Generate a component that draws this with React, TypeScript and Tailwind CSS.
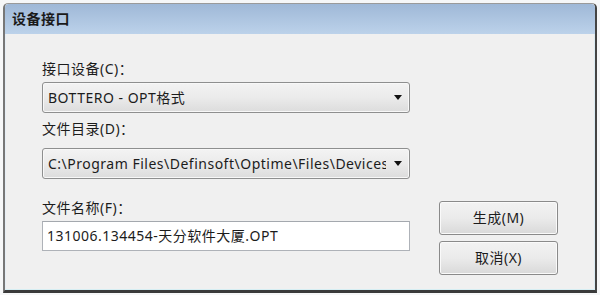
import React from "react";

function Arrow() {
  return (
    <svg width="8" height="5" viewBox="0 0 8 5" className="shrink-0">
      <path d="M0 0 L8 0 L4 5 Z" fill="#111" />
    </svg>
  );
}

function Combo({ text }: { text: string }) {
  return (
    <div className="flex h-[31px] w-full items-center rounded-[3px] border border-[#8e8f8f] bg-gradient-to-b from-[#f3f3f3] via-[#ebebeb] to-[#dcdcdc] pl-[5px] pr-[7px] shadow-[inset_0_0_0_1px_#f8f8f8]">
      <div className="min-w-0 flex-1 overflow-hidden whitespace-nowrap text-[#1c1c1c]">{text}</div>
      <div className="ml-[8px]">
        <Arrow />
      </div>
    </div>
  );
}

function Btn({ text }: { text: string }) {
  return (
    <div className="flex h-[34px] w-[119px] items-center justify-center rounded-[3px] border border-[#8a8a8a] bg-gradient-to-b from-[#f2f2f2] via-[#ebebeb] to-[#d9d9d9] text-[#1c1c1c] shadow-[inset_0_0_0_1px_#fafafa]">
      {text}
    </div>
  );
}

export default function App() {
  return (
    <div
      className="h-[295px] w-[600px] overflow-hidden bg-[#f6f7f8] pl-[3px] pr-[3px] pt-[3px] text-[14px] leading-[20px] tracking-[0.5px]"
      style={{ fontFamily: '"Noto Sans", "Noto Sans CJK SC", sans-serif' }}
    >
      <div className="flex h-[290px] flex-col rounded-t-[5px] border-l-2 border-r-2 border-t border-b-[3px] border-l-[#777] border-r-[#444] border-t-[#9a9a9a] border-b-[#3a3a3a]">
        <div className="flex h-[30px] items-center rounded-t-[4px] bg-gradient-to-b from-[#9fb8d7] to-[#bcd2ea] pl-[7px] text-[14px] font-semibold text-[#1a1a1a]">
          设备接口
        </div>
        <div className="flex flex-1 items-start border-b border-l border-r border-b-[#d6eef3] border-l-[#e6eef5] border-r-[#dcecf3] bg-[#f0f0f0] pl-[36px] pt-[25px]">
          <div className="flex w-[368px] flex-col">
            <div className="h-[20px] text-[#1c1c1c]">接口设备(C)：</div>
            <div className="mt-[3px]">
              <Combo text="BOTTERO - OPT格式" />
            </div>
            <div className="mt-[6px] h-[20px] text-[#1c1c1c]">文件目录(D)：</div>
            <div className="mt-[9px]">
              <Combo text="C:\Program Files\Definsoft\Optime\Files\Devices" />
            </div>
            <div className="mt-[19px] h-[20px] text-[#1c1c1c]">文件名称(F)：</div>
            <div className="mt-[3px] flex h-[30px] items-center border border-[#aeb2b8] border-t-[#a4a8ae] bg-white pl-[4px] text-[#1c1c1c]">
              131006.134454-天分软件大厦.OPT
            </div>
          </div>
          <div className="ml-[29px] flex flex-col gap-[6px] pt-[142px]">
            <Btn text="生成(M)" />
            <Btn text="取消(X)" />
          </div>
        </div>
      </div>
    </div>
  );
}
